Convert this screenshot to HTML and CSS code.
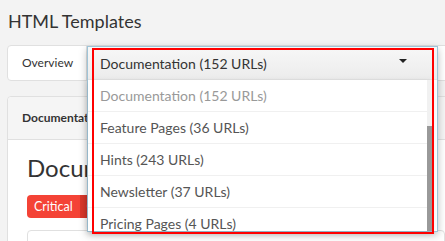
FILE: index.html
```html
<!DOCTYPE html>
<html lang="en">
<head>
  <meta charset="UTF-8">
  <title>HTML Templates</title>
  <link rel="stylesheet" href="styles.css">
</head>
<body>
  <h1 class="page-title">HTML Templates</h1>

  <div class="tabs">
    <div class="tab">Overview</div>
    <div class="tab-rest"></div>
  </div>

  <div class="card">
    <div class="card-header">Documentation</div>
    <div class="card-body">
      <h2 class="card-title">Documentation</h2>
      <div class="badges">
        <span class="badge critical">Critical</span>
        <span class="badge other">Other</span>
      </div>
      <div class="card-box"></div>
    </div>
  </div>

  <div class="select-open">
    <div class="select-head">
      <span>Documentation (152 URLs)</span>
      <span class="caret"></span>
    </div>
    <div class="select-list">
      <ul class="options">
        <li class="muted">Documentation (152 URLs)</li>
        <li>Feature Pages (36 URLs)</li>
        <li>Hints (243 URLs)</li>
        <li>Newsletter (37 URLs)</li>
        <li>Pricing Pages (4 URLs)</li>
      </ul>
      <div class="scrollbar"><div class="thumb"></div></div>
    </div>
  </div>

  <div class="highlight"></div>
</body>
</html>
```

FILE: styles.css
```css
body {
  margin: 0;
  background: #f3f3f3;
  font-family: Lato, "Open Sans", sans-serif;
  color: #333;
  overflow: hidden;
  height: 241px;
}
.page-title {
  margin: 0;
  padding: 9px 8px 0;
  font-size: 18px;
  font-weight: normal;
  line-height: 24px;
  color: #333;
}
.tabs {
  display: flex;
  margin: 12px -20px 0 7px;
  height: 34px;
  background: #fff;
  border: 1px solid #e0e0e0;
  border-radius: 4px;
}
.tab {
  width: 64px;
  padding: 0 0 0 14px;
  line-height: 34px;
  font-size: 12px;
  border-right: 1px solid #e0e0e0;
}
.tab-rest {
  flex: 1;
}
.card {
  margin: 15px -20px 0 7px;
  background: #fff;
  border: 1px solid #e0e0e0;
  border-radius: 4px;
}
.card-header {
  height: 42px;
  padding-left: 14px;
  line-height: 42px;
  font-size: 12px;
  font-weight: bold;
  background: #f5f5f5;
  border-bottom: 1px solid #e0e0e0;
  border-radius: 4px 4px 0 0;
}
.card-body {
  padding: 10px 19px;
}
.card-title {
  margin: 0;
  font-size: 24px;
  font-weight: normal;
  line-height: 36px;
  color: #333;
}
.badges {
  display: flex;
  margin-top: 9px;
}
.badge {
  height: 23px;
  padding: 0 7px;
  line-height: 23px;
  font-size: 12.5px;
  color: #fff;
}
.critical {
  background: #f44336;
  border-radius: 4px 0 0 4px;
}
.other {
  background: #d9372b;
}
.card-box {
  margin-top: 12px;
  height: 40px;
  border: 1px solid #e0e0e0;
  border-radius: 4px;
}

/* open select dropdown, drawn over the tabs and the card */
.select-open {
  position: absolute;
  left: 87px;
  top: 46px;
  width: 349px;
  height: 184px;
  border: 1px solid #9fc4d8;
  box-shadow: 0 3px 8px rgba(0, 0, 0, 0.25);
  background: #fff;
}
.select-head {
  display: flex;
  align-items: center;
  justify-content: space-between;
  height: 32px;
  padding: 0 30px 0 12px;
  font-size: 14px;
  color: #333;
  background: linear-gradient(#f7f7f7, #ececec);
  border-bottom: 1px solid #e4e4e4;
}
.caret {
  width: 0;
  height: 0;
  border-left: 4px solid transparent;
  border-right: 4px solid transparent;
  border-top: 4px solid #222;
  margin-top: -4px;
}
.select-list {
  display: flex;
  height: 151px;
  margin-right: 5px;
  box-shadow: 0 2px 6px rgba(0, 0, 0, 0.15);
}
.options {
  flex: 1;
  margin: 0;
  padding: 0;
  list-style: none;
  overflow: hidden;
}
.options li {
  height: 31px;
  padding-left: 12px;
  line-height: 31px;
  font-size: 14px;
  color: #555;
  border-bottom: 1px solid #f0f0f0;
}
.options li.muted {
  color: #999;
}
.scrollbar {
  width: 5px;
  background: #f1f1f1;
  display: flex;
  flex-direction: column;
  justify-content: flex-end;
}
.thumb {
  height: 105px;
  background: #999;
}
.highlight {
  position: absolute;
  left: 92px;
  top: 48px;
  width: 338px;
  height: 182px;
  border: 2px solid #f00;
}
```
